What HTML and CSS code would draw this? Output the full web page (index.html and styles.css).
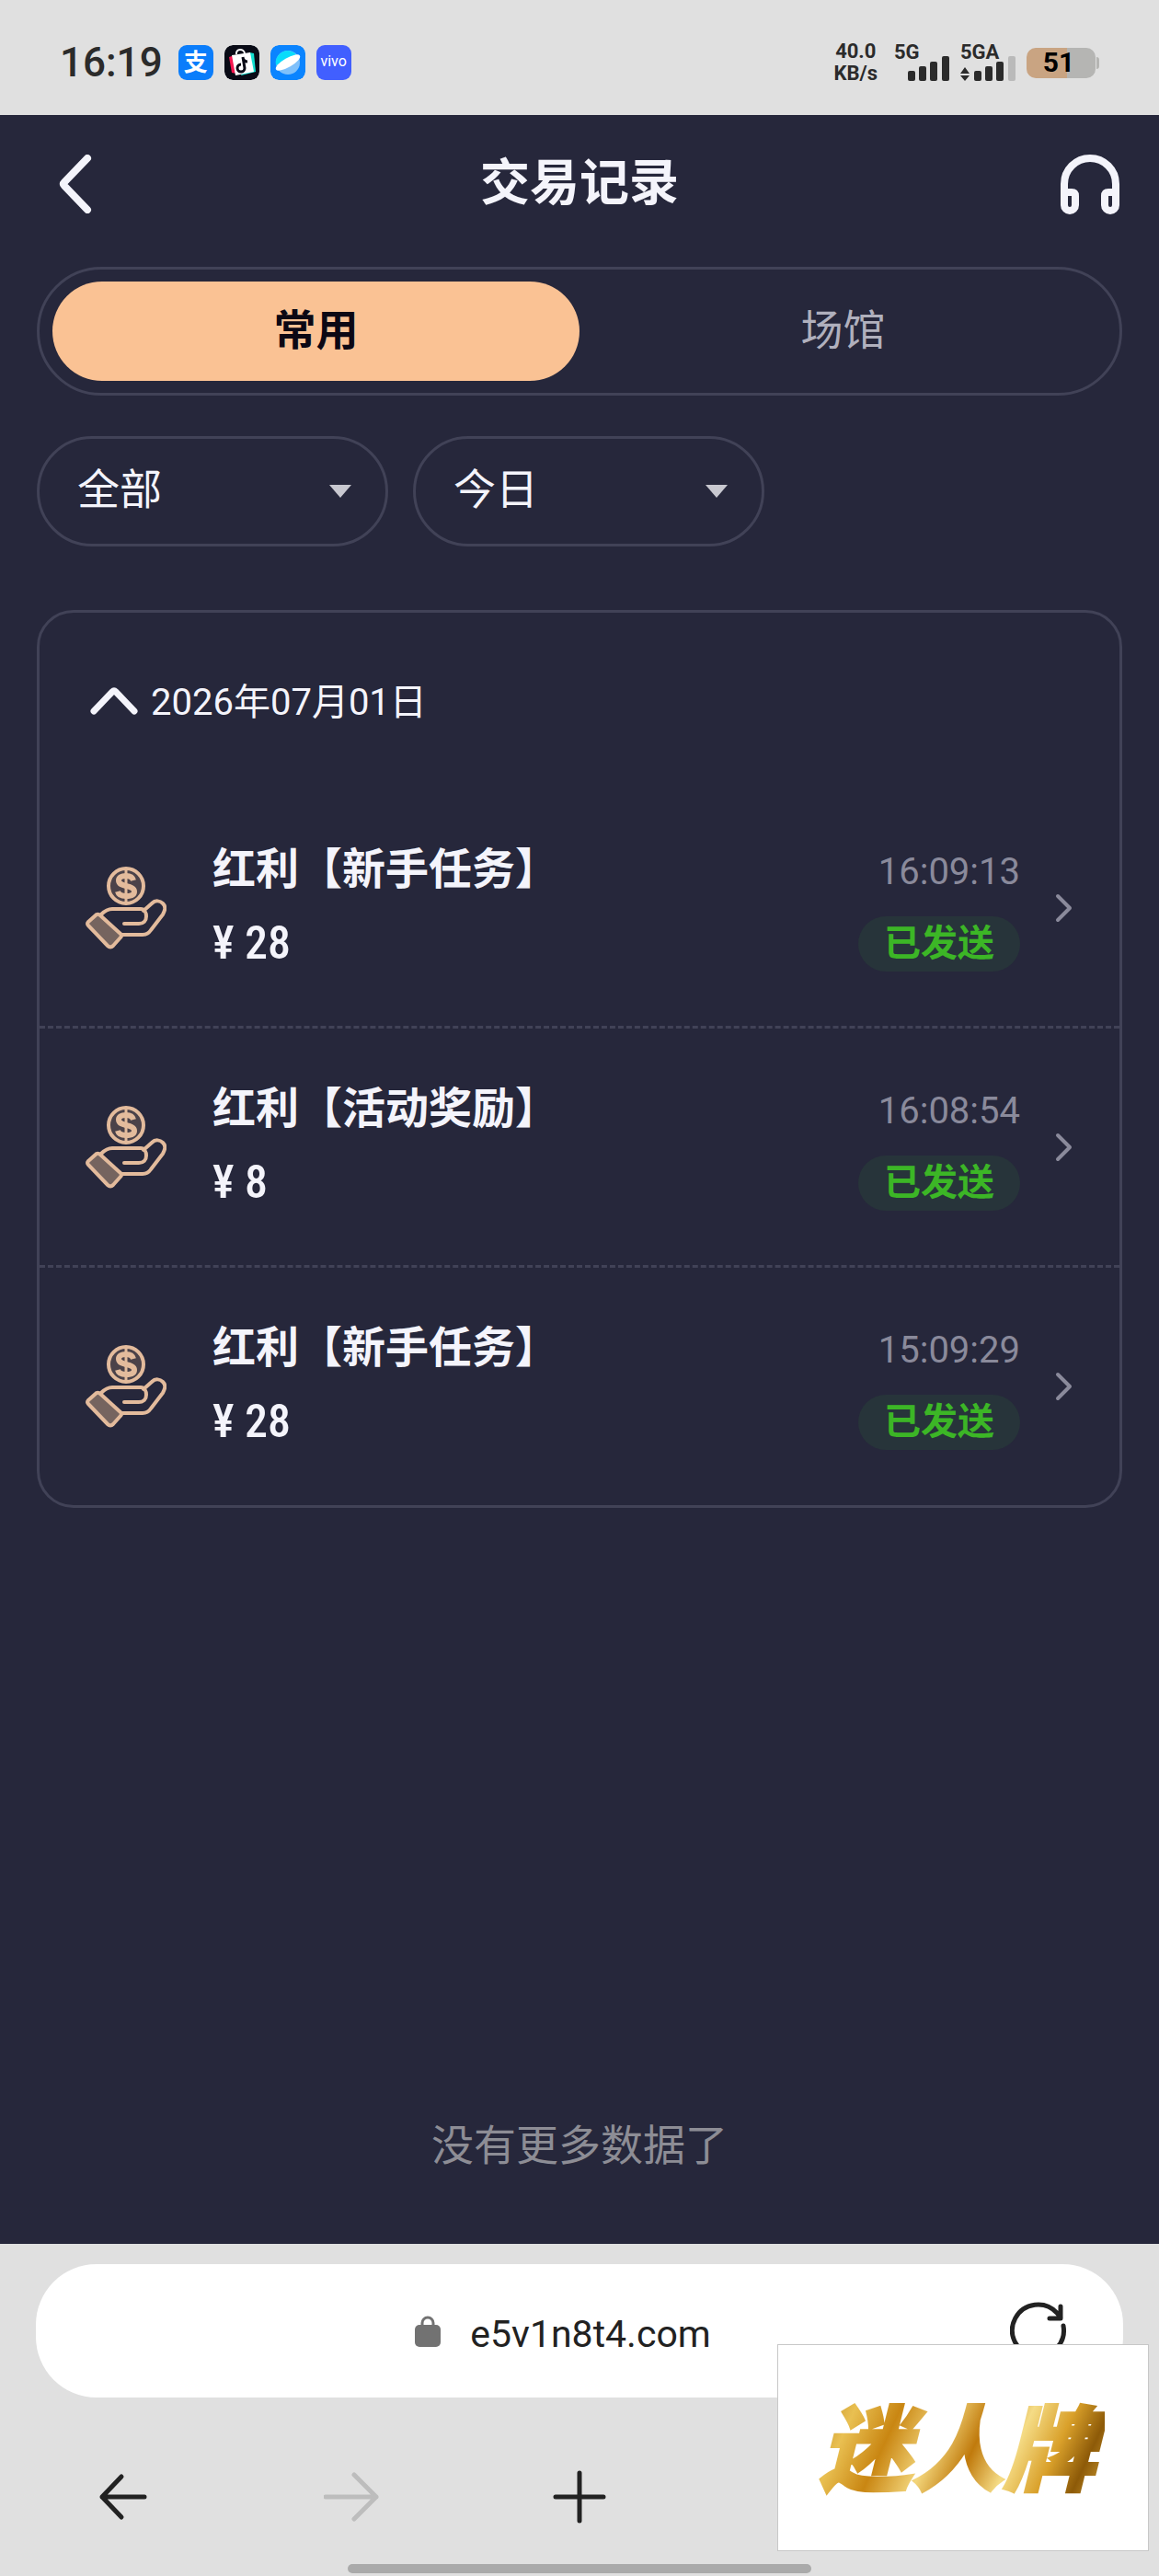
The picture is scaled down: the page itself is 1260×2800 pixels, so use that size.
FILE: index.html
```html
<!DOCTYPE html>
<html lang="zh-CN">
<head>
    <meta charset="UTF-8">
    <meta name="viewport" content="width=device-width">
    <title>交易记录</title>
    <link rel="stylesheet" href="styles.css">
</head>
<body>
    <!-- shared icons -->
    <svg class="sprite" aria-hidden="true">
        <symbol id="bonus" viewBox="0 0 88 90">
            <circle cx="44" cy="21" r="19" fill="#4b4249" stroke="#e3bb9c" stroke-width="4"/>
            <path d="M52 15c-1-4-4-5-8-5-5 0-8 2-8 5 0 4 4 5 8 6s9 2 9 6c0 4-4 5-9 5-4 0-8-1-9-5" fill="none" stroke="#e3bb9c" stroke-width="6"/>
            <path d="M44 3v36" stroke="#e3bb9c" stroke-width="3"/>
            <path d="M17 52c4-4 7-6 12-6h31c4 0 6 4 6 8 0 5-3 8-8 8H42M63 48l9-8c4-4 9-3 12 0 4 4 2 8 0 12L71 69c-2 3-5 5-9 5H38" fill="none" stroke="#e3bb9c" stroke-width="4" stroke-linecap="round" stroke-linejoin="round"/>
            <path d="M3 60l9-8q2-1 4 1l22 20q2 2 0 4l-8 9q-3 3-6 0L3 64q-2-2 0-4z" fill="#75645f" stroke="#e3bb9c" stroke-width="4"/>
        </symbol>
        <symbol id="arrow-right" viewBox="0 0 20 32">
            <path d="M3 3l13 13L3 29" fill="none" stroke="currentColor" stroke-width="4" stroke-linecap="round" stroke-linejoin="round"/>
        </symbol>
        <symbol id="caret" viewBox="0 0 24 14">
            <path d="M0 0h24L12 14z" fill="currentColor"/>
        </symbol>
    </svg>

    <div class="status-bar">
        <div class="status-left">
            <span class="clock">16:19</span>
            <span class="app app-pay">支</span>
            <svg class="app" viewBox="0 0 38 38">
                <rect width="38" height="38" rx="9" fill="#090b16"/>
                <path d="M5 13l6-2 3 20-6-1z" fill="#f5164f"/>
                <path d="M27 8l5 1 2 20-16 4z" fill="#12dfd0"/>
                <path d="M8 11l20-3 4 21-20 4z" fill="#fff"/>
                <path d="M13 10c-1-6 8-7 9-1" fill="none" stroke="#fff" stroke-width="2"/>
                <path d="M20 13l2 12a4 4 0 1 1-4-4M20 14c1 3 3 4 5 4" fill="none" stroke="#090b16" stroke-width="3"/>
            </svg>
            <svg class="app" viewBox="0 0 38 38">
                <rect width="38" height="38" rx="9" fill="#0a84ff"/>
                <circle cx="19" cy="19" r="13" fill="#7fc0fa"/>
                <path d="M6 22a13 13 0 0 1 22-12z" fill="#08dcfb"/>
                <ellipse cx="19" cy="19" rx="15" ry="5" fill="#fff" transform="rotate(-30 19 19)"/>
            </svg>
            <span class="app app-vivo">vivo</span>
        </div>
        <div class="status-right">
            <div class="net-speed"><span>40.0</span><span>KB/s</span></div>
            <div class="signal">
                <span>5G</span>
                <svg width="60" height="27" viewBox="0 0 60 27" fill="#2b2b2b">
                    <rect x="15" y="16" width="8" height="11" rx="2"/>
                    <rect x="27" y="11" width="8" height="16" rx="2"/>
                    <rect x="39" y="6" width="8" height="21" rx="2"/>
                    <rect x="52" y="0" width="8" height="27" rx="2"/>
                </svg>
            </div>
            <div class="signal">
                <span>5GA</span>
                <svg width="60" height="27" viewBox="0 0 60 27" fill="#2b2b2b">
                    <path d="M0 19l5-7 5 7zM0 21l5 6 5-6z"/>
                    <rect x="15" y="16" width="8" height="11" rx="2"/>
                    <rect x="27" y="11" width="8" height="16" rx="2"/>
                    <rect x="39" y="6" width="8" height="21" rx="2"/>
                    <rect x="52" y="0" width="8" height="27" rx="2" fill="#bababa"/>
                </svg>
            </div>
            <div class="battery">51</div>
        </div>
    </div>

    <main class="page">
        <header class="header">
            <button class="icon-button" aria-label="返回">
                <svg width="36" height="64" viewBox="0 0 36 64"><path d="M31 4L6 30q-2 2 0 4L31 60" fill="none" stroke="#f4f4fb" stroke-width="8" stroke-linecap="round"/></svg>
            </button>
            <h1>交易记录</h1>
            <button class="icon-button" aria-label="客服">
                <svg width="66" height="66" viewBox="0 0 66 66" fill="none" stroke="#f4f4fb" stroke-width="8">
                    <path d="M5 46V33a28 28 0 0 1 56 0v13"/>
                    <path d="M5 42h8q4 0 4 4v10a6 6 0 0 1-12 0zM61 42h-8q-4 0-4 4v10a6 6 0 0 0 12 0z"/>
                </svg>
            </button>
        </header>

        <div class="tabs" role="tablist">
            <button class="tab active" role="tab" aria-selected="true">常用</button>
            <button class="tab" role="tab" aria-selected="false">场馆</button>
        </div>

        <div class="filters">
            <div class="filter">
                <select aria-label="类型"><option>全部</option></select>
                <svg class="caret"><use href="#caret"/></svg>
            </div>
            <div class="filter">
                <select aria-label="日期"><option>今日</option></select>
                <svg class="caret"><use href="#caret"/></svg>
            </div>
        </div>

        <section class="records">
            <button class="date">
                <svg width="52" height="32" viewBox="0 0 52 32"><path d="M4 27L24 6q2-2 4 0l20 21" fill="none" stroke="#f4f4fb" stroke-width="7" stroke-linecap="round"/></svg>
                <span>2026年07月01日</span>
            </button>

            <a class="record" href="#">
                <svg class="record-icon"><use href="#bonus"/></svg>
                <div class="record-info">
                    <span class="record-title">红利【新手任务】</span>
                    <span class="amount">¥ 28</span>
                </div>
                <div class="record-status">
                    <span class="time">16:09:13</span>
                    <span class="badge">已发送</span>
                </div>
                <svg class="record-arrow"><use href="#arrow-right"/></svg>
            </a>
            <a class="record" href="#">
                <svg class="record-icon"><use href="#bonus"/></svg>
                <div class="record-info">
                    <span class="record-title">红利【活动奖励】</span>
                    <span class="amount">¥ 8</span>
                </div>
                <div class="record-status">
                    <span class="time">16:08:54</span>
                    <span class="badge">已发送</span>
                </div>
                <svg class="record-arrow"><use href="#arrow-right"/></svg>
            </a>
            <a class="record" href="#">
                <svg class="record-icon"><use href="#bonus"/></svg>
                <div class="record-info">
                    <span class="record-title">红利【新手任务】</span>
                    <span class="amount">¥ 28</span>
                </div>
                <div class="record-status">
                    <span class="time">15:09:29</span>
                    <span class="badge">已发送</span>
                </div>
                <svg class="record-arrow"><use href="#arrow-right"/></svg>
            </a>
        </section>

        <p class="no-more">没有更多数据了</p>
    </main>

    <footer class="browser-bar">
        <div class="address">
            <svg width="28" height="34" viewBox="0 0 28 34"><rect y="10" width="28" height="24" rx="5" fill="#727272"/><path d="M8 12V8a6 6 0 0 1 12 0v4" fill="none" stroke="#727272" stroke-width="3"/></svg>
            <span class="url">e5v1n8t4.com</span>
            <button class="icon-button reload" aria-label="刷新">
                <svg width="62" height="62" viewBox="0 0 62 62" fill="none" stroke="#222" stroke-width="5" stroke-linecap="round" stroke-linejoin="round">
                    <path d="M58 26a28 28 0 1 1-7-14l4 5M55 5v13H43"/>
                </svg>
            </button>
        </div>
        <nav class="browser-nav">
            <button class="icon-button" aria-label="后退">
                <svg width="60" height="60" viewBox="0 0 60 60"><path d="M54 30H8M29 8L8 30l21 22" fill="none" stroke="#222" stroke-width="5" stroke-linecap="round" stroke-linejoin="round"/></svg>
            </button>
            <button class="icon-button" aria-label="前进" disabled>
                <svg width="60" height="60" viewBox="0 0 60 60"><path d="M2 30h55M33 6l24 24-24 24" fill="none" stroke="#bdbdbd" stroke-width="5" stroke-linecap="round" stroke-linejoin="round"/></svg>
            </button>
            <button class="icon-button" aria-label="新建标签页">
                <svg width="60" height="60" viewBox="0 0 60 60"><path d="M4 30h52M30 4v52" fill="none" stroke="#222" stroke-width="5" stroke-linecap="round"/></svg>
            </button>
        </nav>
        <div class="home-indicator"></div>
        <div class="watermark"><span>迷人牌</span></div>
    </footer>
</body>
</html>
```
FILE: styles.css
```css
:root {
    --bg: #26273b;
    --line: #414257;
    --text: #f4f4fb;
    --muted: #8a8a9b;
    --accent: #fac294;
    --green: #3cb626;
    --chrome: #e0e0e0;
    --dark: #2b2b2b;
}

* {
    box-sizing: border-box;
}

body {
    margin: 0;
    min-height: 100vh;
    display: flex;
    flex-direction: column;
    background: var(--bg);
    color: var(--text);
    font-family: Roboto, "Noto Sans CJK SC", sans-serif;
    font-size: 46px;
}

button,
select {
    font: inherit;
    color: inherit;
    background: none;
    border: none;
    padding: 0;
}

svg {
    display: block;
    flex: none;
}

.sprite {
    position: absolute;
    width: 0;
    height: 0;
}

/* phone status bar */
.status-bar {
    height: 125px;
    padding: 11px 69px 0 65px;
    display: flex;
    align-items: center;
    justify-content: space-between;
    background: var(--chrome);
    color: var(--dark);
}

.status-left {
    display: flex;
    align-items: center;
    gap: 12px;
}

.clock {
    font-size: 44px;
    font-weight: 500;
    margin-right: 5px;
}

.app {
    width: 38px;
    height: 38px;
    border-radius: 9px;
    line-height: 38px;
    text-align: center;
    color: #fff;
}

.app-pay {
    background: #0a7dfb;
    font-size: 26px;
    font-weight: 700;
}

.app-vivo {
    background: #415fff;
    font-size: 16px;
    line-height: 36px;
}

.status-right {
    display: flex;
    align-items: center;
    gap: 12px;
    font-weight: 700;
}

.net-speed {
    display: flex;
    flex-direction: column;
    align-items: center;
    margin-right: 6px;
    font-size: 22px;
    line-height: 24px;
}

.signal {
    height: 40px;
    font-size: 22px;
    line-height: 18px;
}

.signal svg {
    margin-top: -5px;
}

.battery {
    position: relative;
    width: 75px;
    height: 33px;
    border-radius: 10px;
    background: linear-gradient(90deg, #c9a482 59%, #b5b5b3 59%);
    color: #000;
    font-size: 30px;
    line-height: 32px;
    text-align: center;
    padding-right: 5px;
}

.battery::after {
    content: "";
    position: absolute;
    left: 76px;
    top: 10px;
    width: 3px;
    height: 13px;
    border-radius: 0 3px 3px 0;
    background: #b5b5b3;
}

/* page */
.page {
    flex: 1;
    display: flex;
    flex-direction: column;
    padding: 0 40px;
}

.header {
    height: 165px;
    padding: 0 2px 16px 24px;
    display: flex;
    align-items: center;
    justify-content: space-between;
}

h1 {
    margin: 0;
    padding: 0 0 10px 8px;
    font-size: 54px;
    font-weight: 700;
}

.tabs {
    display: flex;
    height: 140px;
    padding: 13px 14px;
    border: 3px solid var(--line);
    border-radius: 70px;
}

.tab {
    flex: 1;
    padding-bottom: 10px;
    border-radius: 54px;
    color: #b0b0bd;
}

.tab.active {
    background: var(--accent);
    color: #0c0814;
    font-weight: 700;
}

.filters {
    display: flex;
    gap: 27px;
    margin-top: 44px;
}

.filter {
    position: relative;
    width: 33%;
    max-width: 382px;
}

.filter select {
    width: 100%;
    height: 120px;
    padding: 0 80px 4px 41px;
    border: 3px solid var(--line);
    border-radius: 60px;
    appearance: none;
}

.caret {
    position: absolute;
    right: 40px;
    top: 53px;
    width: 24px;
    height: 14px;
    color: #c8c8d0;
    pointer-events: none;
}

/* records */
.records {
    margin-top: 69px;
    border: 3px solid var(--line);
    border-radius: 40px;
}

.date {
    display: flex;
    align-items: center;
    gap: 14px;
    height: 192px;
    padding: 0 55px;
    font-size: 40px;
}

.date span {
    padding-bottom: 4px;
}

.record {
    display: flex;
    align-items: center;
    height: 260px;
    padding: 0 50px;
    color: inherit;
    text-decoration: none;
    border-bottom: 3px dashed var(--line);
}

.record:last-child {
    height: 258px;
    border-bottom: none;
}

.record-icon {
    width: 88px;
    height: 90px;
}

.record-info {
    flex: 1;
    display: flex;
    flex-direction: column;
    margin-left: 50px;
    padding-bottom: 4px;
}

.record-title {
    font-size: 47px;
    font-weight: 700;
    line-height: 80px;
}

.amount {
    font-family: "Liberation Sans Narrow", "Roboto Condensed", Roboto, sans-serif;
    font-size: 50px;
    font-weight: 500;
    line-height: 80px;
}

.record-status {
    display: flex;
    flex-direction: column;
    align-items: flex-end;
    gap: 18px;
    font-size: 40px;
}

.time {
    color: var(--muted);
    line-height: 60px;
}

.badge {
    padding: 0 28px;
    border-radius: 30px;
    background: #27343a;
    color: var(--green);
    font-weight: 700;
    line-height: 60px;
}

.record-arrow {
    width: 20px;
    height: 32px;
    margin-left: 38px;
    color: var(--muted);
}

.no-more {
    margin: auto 0 0;
    padding-bottom: 78px;
    color: #8d8d95;
    text-align: center;
}

/* browser chrome */
.browser-bar {
    position: relative;
    padding: 22px 9px 3px;
    background: var(--chrome);
    color: #222;
}

.address {
    position: relative;
    display: flex;
    align-items: center;
    justify-content: center;
    gap: 32px;
    height: 145px;
    margin: 0 30px;
    padding-right: 36px;
    border-radius: 66px;
    background: #fff;
    font-size: 41px;
}

.url {
    padding-top: 6px;
}

.reload {
    position: absolute;
    right: 61px;
    top: 41px;
}

.browser-nav {
    display: grid;
    grid-template-columns: repeat(5, 1fr);
    height: 181px;
    align-items: center;
    padding-top: 35px;
}

.browser-nav .icon-button {
    justify-self: center;
}

.home-indicator {
    width: 504px;
    height: 10px;
    margin: 0 auto;
    border-radius: 5px;
    background: #aaa;
}

/* sits over the corner of the browser bar */
.watermark {
    position: absolute;
    right: 11px;
    bottom: 27px;
    width: 404px;
    height: 225px;
    display: flex;
    align-items: center;
    justify-content: center;
    padding: 8px 12px 0 0;
    background: #fff;
    border: 1px solid #c8c8c8;
}

.watermark span {
    padding: 0 10px;
    background: linear-gradient(115deg, #b57a10, #e9c052 15%, #c98612 28%, #f3d67c 42%, #c07a0c 54%, #f5dc86 66%, #d9a02a 78%, #8d5a08 88%, #e0b040);
    background-clip: text;
    -webkit-background-clip: text;
    color: transparent;
    -webkit-text-stroke: 3px transparent;
    font-size: 100px;
    font-weight: 900;
    font-style: italic;
    line-height: 130px;
}
```
